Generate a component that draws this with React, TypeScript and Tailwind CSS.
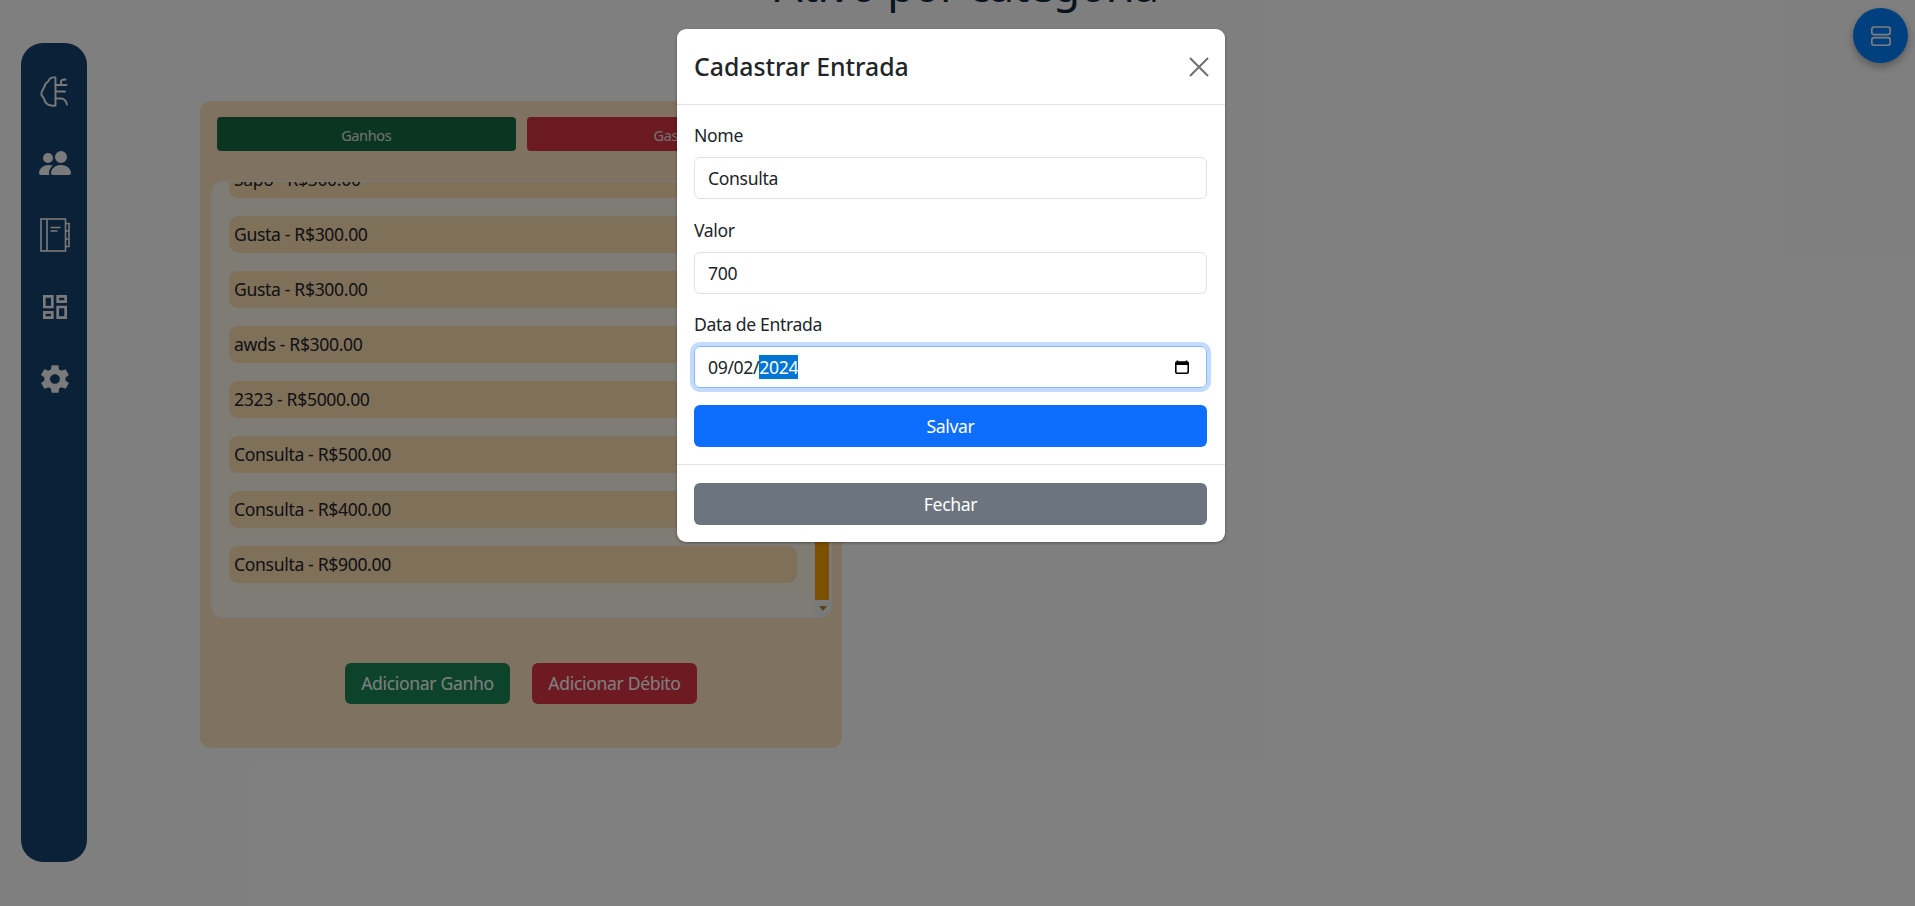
import React from "react";
import { BsPeopleFill } from "react-icons/bs";
import { MdOutlineDashboard } from "react-icons/md";
import { IoMdSettings } from "react-icons/io";

function BrainIcon() {
  return (
    <svg width="30" height="32" viewBox="0 0 30 32" fill="none" stroke="currentColor" strokeWidth="1.9" strokeLinecap="round" strokeLinejoin="round">
      <path d="M15.5 1.5C11.5 1 9.5 2 8.5 5C6.5 6.5 4.5 8 4.3 11C2.5 14 0.8 16 1.4 18.5C2.2 21 4 21.5 4.5 24C5 27.5 9 30.5 15.5 29.5V1.5Z" />
      <path d="M15.5 15.5H25" />
      <path d="M15.5 9H21V5.5C21 4 22.5 3.5 25.5 3.5" />
      <path d="M21 9H26.5" />
      <path d="M15.5 22.5H21C24 22.5 26 24.5 27 28.5" />
    </svg>
  );
}

function JournalIcon() {
  return (
    <svg width="30" height="34" viewBox="0 0 30 34" fill="none" stroke="currentColor" strokeWidth="1.6">
      <rect x="1" y="1" width="24.5" height="32" />
      <path d="M7 1v32" />
      <path d="M10.5 9.5h10M10.5 13h7" />
      <path d="M25.5 5.5h3.5v23h-3.5M25.5 13h3.5M25.5 21h3.5" />
    </svg>
  );
}

function ServerIcon() {
  return (
    <svg width="20" height="20" viewBox="0 0 20 20" fill="none" stroke="currentColor" strokeWidth="1.6">
      <rect x="0.8" y="1" width="18.4" height="7.6" rx="2.4" />
      <rect x="0.8" y="11.6" width="18.4" height="7.6" rx="2.4" />
    </svg>
  );
}

function CalendarIcon() {
  return (
    <svg width="16" height="16" viewBox="0 0 16 16" fill="none">
      <path d="M3.5 1.5V3M12.5 1.5V3" stroke="#000" strokeWidth="1.6" />
      <rect x="1.8" y="3" width="12.4" height="11.2" rx="1.2" stroke="#000" strokeWidth="1.6" />
      <rect x="1.5" y="3" width="13" height="3" fill="#000" />
    </svg>
  );
}

const items = [
  "Gusta - R$300.00",
  "Gusta - R$300.00",
  "awds - R$300.00",
  "2323 - R$5000.00",
  "Consulta - R$500.00",
  "Consulta - R$400.00",
  "Consulta - R$900.00",
];

function Field({ label, value, mt }: { label: string; value: string; mt: string }) {
  return (
    <div className={mt}>
      <div className="h-[26px] text-[17.6px] leading-[26px] text-[#212529]">{label}</div>
      <div className="mt-[9px] flex h-[42px] items-center rounded-[6px] border border-[#dee2e6] px-[13px] text-[17.6px] text-[#212529]">
        {value}
      </div>
    </div>
  );
}

export default function App() {
  return (
    <div className="relative flex h-[906px] w-[1915px] overflow-hidden bg-white font-['Noto_Sans','Open_Sans',sans-serif] tracking-[-0.35px]">
      {/* Sidebar */}
      <aside className="mt-[43px] ml-[21px] flex h-[819px] w-[66px] shrink-0 flex-col items-center rounded-[22px] bg-[#14426e] pt-[33px] pl-[2px] text-[#f5f5f5]">
        <div className="flex h-[32px] items-center justify-center">
          <BrainIcon />
        </div>
        <div className="mt-[43px] flex h-[24px] items-center justify-center">
          <BsPeopleFill size={32} />
        </div>
        <div className="mt-[43px] flex h-[34px] items-center justify-center">
          <JournalIcon />
        </div>
        <div className="mt-[39px] flex h-[32px] items-center justify-center">
          <MdOutlineDashboard size={32} />
        </div>
        <div className="mt-[39px] flex h-[34px] items-center justify-center">
          <IoMdSettings size={34} />
        </div>
      </aside>

      {/* Main */}
      <main className="min-w-0 flex-1">
        <h1 className="mt-[-44px] ml-[-69px] h-[55px] text-center text-[44px] leading-[58px] font-normal tracking-[-0.5px] text-[#12283f]">
          Ativo por categoria
        </h1>
        <section className="mt-[90px] ml-[113px] h-[647px] w-[642px] rounded-[11px] bg-[#ffe4c0] px-[11px] pt-[16px]">
          <div className="flex gap-[11px] px-[6px]">
            <button className="h-[34px] w-[299px] rounded-[4px] bg-[#146c43] pt-[3px] text-[14.5px] text-[#e5e5e5]">Ganhos</button>
            <button className="h-[34px] w-[299px] rounded-[4px] bg-[#d63443] pt-[3px] text-[14.5px] text-[#e5e5e5]">Gastos</button>
          </div>
          <div className="relative mt-[30px] h-[437px] w-[621px] overflow-hidden rounded-[11px] border border-[#f0f0f0] bg-[#fff8ec]">
            <div className="relative flex flex-col gap-[18px] pl-[17px]">
              <div className="mt-[-21px] flex h-[37px] w-[568px] items-center rounded-[9px] bg-[#ffe0b4] px-[5px] text-[17.6px] text-[#212529]">
                Sapo - R$300.00
              </div>
              {items.map((t, i) => (
                <div key={i} className="flex h-[37px] w-[568px] items-center rounded-[9px] bg-[#ffe0b4] px-[5px] text-[17.6px] text-[#212529]">
                  {t}
                </div>
              ))}
            </div>
            <div className="absolute top-0 right-0 bottom-0 flex w-[17px] flex-col bg-[#f4f4f4]">
              <div className="mt-[200px] ml-[1px] w-[14px] flex-1 bg-[#fa9f00]" />
              <div className="flex h-[17px] items-center justify-center">
                <div className="h-0 w-0 border-x-[4px] border-t-[5px] border-x-transparent border-t-[#b8862a]" />
              </div>
            </div>
          </div>
          <div className="mt-[45px] flex justify-center gap-[22px]">
            <button className="h-[41px] w-[165px] rounded-[6px] bg-[#198754] text-[17.6px] text-white">Adicionar Ganho</button>
            <button className="h-[41px] w-[165px] rounded-[6px] bg-[#dc3545] text-[17.6px] text-white">Adicionar Débito</button>
          </div>
        </section>
      </main>

      {/* Floating button */}
      <button className="absolute top-[8px] right-[7px] flex h-[55px] w-[55px] items-center justify-center rounded-full bg-[#0080ff] text-white shadow-[0_4px_8px_rgba(0,0,0,0.3)]">
        <ServerIcon />
      </button>

      {/* Backdrop */}
      <div className="absolute inset-0 bg-black/50" />

      {/* Modal */}
      <div className="absolute top-[29px] left-[677px] w-[548px] rounded-[9px] bg-white shadow-[0_1px_3px_rgba(0,0,0,0.35)]">
        <header className="flex h-[76px] items-center justify-between border-b border-[#dee2e6] pr-[16px] pl-[17px]">
          <h2 className="text-[24.8px] leading-none font-medium tracking-normal text-[#212529]">Cadastrar Entrada</h2>
          <svg width="20" height="20" viewBox="0 0 20 20" stroke="#6f6f6f" strokeWidth="2">
            <path d="M1 1l18 18M19 1L1 19" />
          </svg>
        </header>
        <div className="h-[360px] border-b border-[#dee2e6] pt-[17px] pr-[18px] pl-[17px]">
          <Field label="Nome" value="Consulta" mt="" />
          <Field label="Valor" value="700" mt="mt-[18px]" />
          <div className="mt-[17px]">
            <div className="h-[26px] text-[17.6px] leading-[26px] text-[#212529]">Data de Entrada</div>
            <div className="mt-[9px] flex h-[42px] items-center justify-between rounded-[6px] border border-[#86b7fe] pr-[16px] pl-[13px] text-[17.6px] text-[#212529] shadow-[0_0_0_4px_#c2dbfe]">
              <span>
                09/02/<span className="bg-[#0075d4] text-white">2024</span>
              </span>
              <CalendarIcon />
            </div>
          </div>
          <button className="mt-[17px] h-[42px] w-full rounded-[6px] bg-[#0d6efd] text-[17.6px] text-white">Salvar</button>
        </div>
        <div className="pt-[18px] pr-[18px] pb-[17px] pl-[17px]">
          <button className="h-[42px] w-full rounded-[6px] bg-[#6c757d] text-[17.6px] text-white">Fechar</button>
        </div>
      </div>
    </div>
  );
}
